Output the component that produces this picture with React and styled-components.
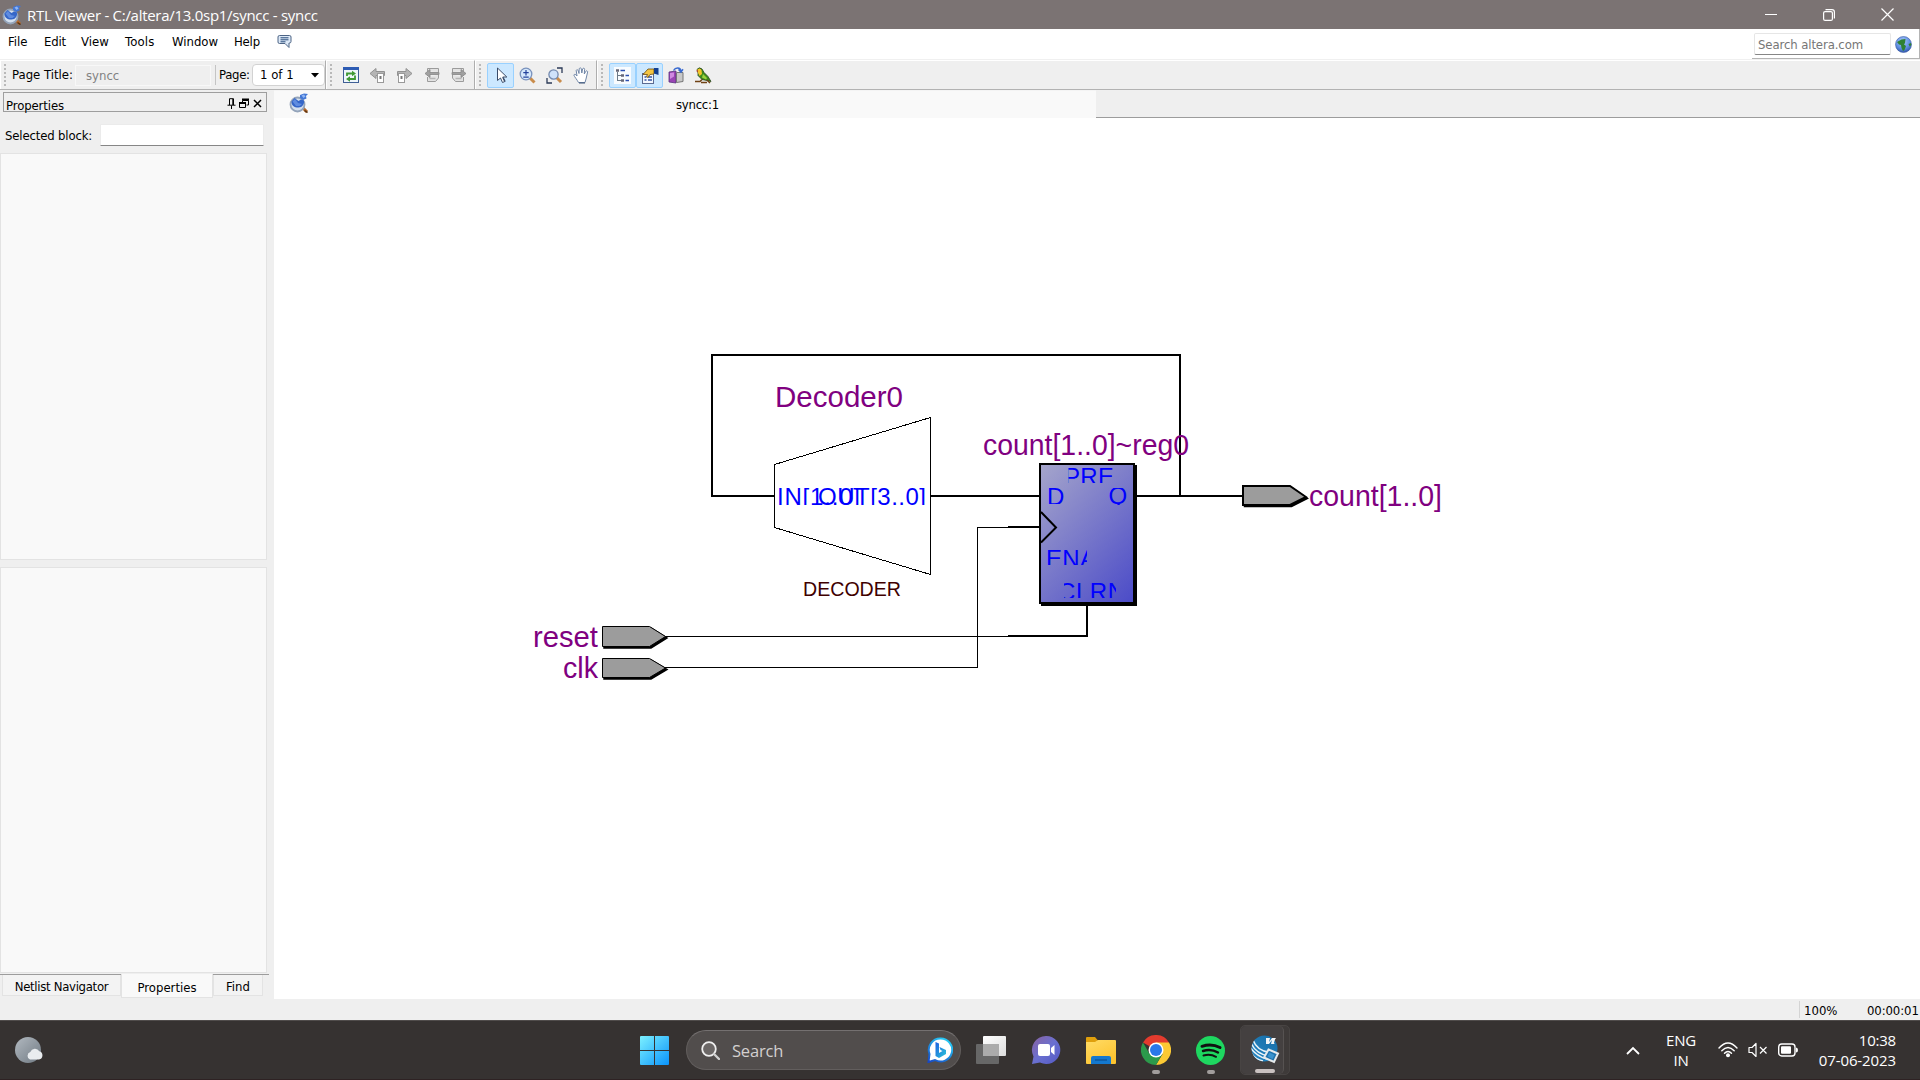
import React from "react";
import styled, { createGlobalStyle } from "styled-components";

const Global = createGlobalStyle`
  * { box-sizing: border-box; }
  body { margin: 0; overflow: hidden; background: #efefef; }
`;

const dialogFont = `"DejaVu Sans Condensed", "DejaVu Sans", sans-serif`;
const shellFont = `"Open Sans", "Noto Sans", sans-serif`;

const Screen = styled.div`
  width: 1920px;
  height: 1080px;
  display: flex;
  flex-direction: column;
  background: #efefef;
  font: 13px/16px ${dialogFont};
  color: #000;
  overflow: hidden;
`;

const Label = styled.span`
  display: block;
  white-space: nowrap;
  flex: none;
  width: ${(p) => (p.$w ? `${p.$w}px` : "auto")};
  letter-spacing: ${(p) => p.$ls || 0}px;
`;

/* ---------- title bar ---------- */
const TitleBar = styled.header`
  height: 29px;
  flex: none;
  display: flex;
  align-items: center;
  padding: 0 4px 0 2px;
  background: #7b7373;
  color: #fff;
`;
const TitleText = styled.div`
  margin-left: 5px;
  flex: 1;
  font: 15px/20px ${shellFont};
  letter-spacing: -0.28px;
  white-space: nowrap;
`;
const WindowButtons = styled.div`
  display: flex;
  svg { display: block; }
`;
const WindowButton = styled.div`
  width: 58px;
  height: 29px;
  display: flex;
  align-items: center;
  justify-content: center;
`;

/* ---------- menu ---------- */
const MenuBar = styled.nav`
  height: 30px;
  flex: none;
  display: flex;
  padding-left: 8px;
  background: #fff;
`;
const MenuItem = styled.div`
  width: ${(p) => p.$w}px;
  padding-top: 5px;
  letter-spacing: ${(p) => p.$ls || 0}px;
  white-space: nowrap;
`;
const SearchDock = styled.div`
  margin-left: auto;
  width: 168px;
  height: 30px;
  padding: 4px 7px 0 2px;
  display: flex;
  justify-content: space-between;
  border-bottom: 1px solid #b4b4b4;
  border-right: 1px solid #b4b4b4;
`;
const SearchField = styled.div`
  width: 137px;
  height: 22px;
  padding: 3px 0 0 3px;
  border: 1px solid #e6e6e6;
  border-bottom: 1px solid #868686;
  border-radius: 2px;
  color: #767676;
  white-space: nowrap;
  letter-spacing: -0.1px;
`;
const GlobeSlot = styled.div`
  padding-top: 3px;
`;

/* ---------- toolbar ---------- */
const ToolBar = styled.div`
  height: 31px;
  flex: none;
  display: flex;
  background: #efefef;
  border-top: 1px solid #f0f0f0;
  border-bottom: 1px solid #b2b2b2;
`;
const ToolGroup = styled.div`
  width: ${(p) => p.$w}px;
  flex: ${(p) => (p.$last ? 1 : "none")};
  height: 29px;
  display: flex;
  align-items: center;
  padding-left: 3px;
  border-left: 1px solid #fff;
  border-top: 1px solid #fff;
  border-right: ${(p) => (p.$last ? "0" : "1px solid #aeaeae")};
`;
const Grip = styled.div`
  width: 2px;
  height: 22px;
  flex: none;
  margin-right: ${(p) => p.$gap}px;
  background: repeating-linear-gradient(#b9b9b9 0 2px, transparent 2px 4px);
`;
const PageTitleField = styled.div`
  width: 136px;
  height: 21px;
  border: 1px solid #f8f8f8;
  padding: 2px 0 0 10px;
  color: #828282;
`;
const Divider = styled.div`
  width: 1px;
  height: 20px;
  margin: 0 3px 0 4px;
  background: #c4c4c4;
`;
const PageSelect = styled.div`
  width: 73px;
  height: 22px;
  display: flex;
  align-items: center;
  justify-content: space-between;
  padding: 0 5px 0 7px;
  background: #fff;
  border: 1px solid #d2d2d2;
  border-radius: 4px;
`;
const ToolButton = styled.div`
  width: 27px;
  height: 25px;
  flex: none;
  display: flex;
  align-items: center;
  justify-content: center;
  background: ${(p) => (p.$on ? "#cce8ff" : "transparent")};
  border: 1px solid ${(p) => (p.$on ? "#99d1ff" : "transparent")};
  border-radius: 2px;
`;

/* ---------- work area ---------- */
const Work = styled.div`
  flex: 1;
  min-height: 0;
  display: flex;
`;
const Dock = styled.aside`
  width: 274px;
  flex: none;
  display: flex;
  flex-direction: column;
`;
const DockTitle = styled.div`
  width: 264px;
  height: 20px;
  margin: 2px 0 0 3px;
  padding-left: 2px;
  display: flex;
  border: 1px solid #9e9e9e;
`;
const DockName = styled.div`
  flex: 1;
  padding-top: 5px;
  height: 22px;
  letter-spacing: -0.1px;
`;
const DockControls = styled.div`
  padding: 4px 3px 0 0;
`;
const BlockRow = styled.div`
  display: flex;
  align-items: center;
  height: 22px;
  margin: 12px 0 7px 5px;
`;
const BlockLabel = styled.label`
  width: 95px;
  flex: none;
  padding-top: 2px;
  white-space: nowrap;
  letter-spacing: -0.15px;
`;
const BlockField = styled.div`
  width: 164px;
  height: 22px;
  background: #fff;
  border: 1px solid #ebebeb;
  border-bottom: 1px solid #868686;
  border-radius: 1px;
`;
const ListPane = styled.div`
  width: 267px;
  height: 407px;
  margin-bottom: ${(p) => p.$gap}px;
  background: #f9f9f9;
  border: 1px solid #e3e3e3;
`;
const DockTabs = styled.div`
  width: 269px;
  display: flex;
  align-items: flex-start;
  padding-left: 2px;
  border-top: 1px solid #9c9c9c;
  height: 25px;
`;
const DockTab = styled.div`
  width: ${(p) => p.$w}px;
  height: ${(p) => (p.$active ? 24 : 21)}px;
  margin-top: ${(p) => (p.$active ? -1 : 0)}px;
  padding-top: ${(p) => (p.$active ? 6 : 4)}px;
  text-align: center;
  background: ${(p) => (p.$active ? "#f9f9f9" : "#f3f3f3")};
  border: 1px solid #e3e3e3;
  border-top: 0;
  white-space: nowrap;
  letter-spacing: ${(p) => p.$ls || 0}px;
`;

const Editor = styled.main`
  flex: 1;
  display: flex;
  flex-direction: column;
`;
const EditorTabs = styled.div`
  height: 28px;
  flex: none;
  display: flex;
`;
const EditorTab = styled.div`
  width: 822px;
  display: flex;
  align-items: center;
  padding: 0 0 3px 15px;
  background: #f9f9f9;
  border-top: 1px solid #f4f4f4;
`;
const EditorTabName = styled.div`
  margin: 4px 0 0 367px;
  letter-spacing: -0.25px;
`;
const TabFill = styled.div`
  flex: 1;
  border-bottom: 1px solid #9c9c9c;
`;
const Canvas = styled.svg`
  display: block;
  flex: none;
  width: 1646px;
  height: 881px;
  background: #fff;
  font-family: "Liberation Sans", Arial, sans-serif;
`;

/* ---------- status bar ---------- */
const StatusBar = styled.footer`
  height: 21px;
  flex: none;
  display: flex;
  justify-content: flex-end;
  padding: 2px 0 0;
`;
const StatusCell = styled.div`
  width: ${(p) => p.$w}px;
  height: 17px;
  padding: 2px 0 0 4px;
  border-left: ${(p) => (p.$line ? "1px solid #d4d4d4" : "0")};
  white-space: nowrap;
  line-height: 15px;
  letter-spacing: ${(p) => p.$ls || 0}px;
`;

/* ---------- taskbar ---------- */
const TaskBar = styled.div`
  height: 60px;
  flex: none;
  display: flex;
  align-items: center;
  background: #363231;
  border-top: 1px solid #504c4b;
  border-bottom: 1px solid #2e2223;
  color: #fff;
  font: 15px/20px ${shellFont};
  svg { display: block; }
`;
const Weather = styled.div`
  width: 626px;
  padding-left: 14px;
`;
const StartSlot = styled.div`
  width: 60px;
  padding-left: 14px;
`;
const SearchPill = styled.div`
  width: 275px;
  height: 40px;
  display: flex;
  align-items: center;
  padding: 0 7px 0 14px;
  background: #514d4c;
  border: 1px solid #625e5d;
  border-top-color: #747070;
  border-radius: 20px;
`;
const SearchHint = styled.div`
  flex: 1;
  margin: 2px 0 0 12px;
  font-size: 16.5px;
  letter-spacing: -0.2px;
  color: #d3d0cf;
`;
const Apps = styled.div`
  width: 640px;
  display: flex;
  padding-left: 2px;
`;
const AppSlot = styled.div`
  width: 55px;
  height: 50px;
  display: flex;
  flex-direction: column;
  align-items: center;
  justify-content: flex-end;
`;
const AppMark = styled.div`
  width: ${(p) => p.$w}px;
  height: 4px;
  margin: ${(p) => p.$mt}px 0 1px;
  border-radius: 2px;
  background: ${(p) => (p.$w ? (p.$w > 10 ? "#c9c1c0" : "#a19d9c") : "transparent")};
`;
const ActiveStack = styled.div`
  width: 50px;
  height: 50px;
  margin-left: 2px;
  padding-right: 5px;
  background: #3e3a39;
  border: 1px solid #484443;
  border-radius: 5px;
`;
const ActiveTile = styled.div`
  width: 43px;
  height: 48px;
  display: flex;
  flex-direction: column;
  align-items: center;
  justify-content: flex-end;
  padding-left: 6px;
  background: #444040;
  border-right: 1px solid #565251;
  border-radius: 5px;
`;
const Tray = styled.div`
  flex: 1;
  display: flex;
  align-items: center;
  justify-content: flex-end;
  padding-right: 24px;
`;
const Language = styled.div`
  width: 44px;
  margin: 0 15px 0 19px;
  text-align: center;
  letter-spacing: -0.2px;
`;
const TrayIcons = styled.div`
  display: flex;
  align-items: center;
  gap: 10px;
`;
const Clock = styled.div`
  width: 98px;
  display: flex;
  flex-direction: column;
  align-items: flex-end;
`;

/* ---------- icons ---------- */
const ViewerIcon = ({ size = 20 }) => (
  <svg width={size} height={size} viewBox="0 0 20 20">
    <path d="M13 14l5 5" stroke="#b4692c" strokeWidth="3" />
    <path d="M15.5 17.5l3 2" stroke="#5a3310" strokeWidth="1.5" />
    <circle cx="8.5" cy="11.5" r="7" fill="#d3dfee" stroke="#94a4ba" strokeWidth="1.8" />
    <path d="M2.500 8.500l3-3.500 4 3 2.500-1.500 3 1c.5 3.500-1.500 7-5.500 7-4.500 0-7-2-7-6z" fill="#3566c8" />
    <path d="M3.500 8.500L6 6l3 4 4 1-2.500 2H7z" fill="#5f8ce0" />
    <path d="M11 2l4-1.500 4 .5-2 2 .5 2.500-3.500 1.500-3-2z" fill="#4377d4" />
    <path d="M12.500 2.500l2.500-1 1.500 2-2 1.500z" fill="#8fb5f5" />
  </svg>
);
const ChatIcon = () => (
  <svg width="15" height="15" viewBox="0 0 15 15">
    <path d="M2.500 1.500h10q1.500 0 1.500 1.500v4.500q0 1.500-1.500 1.500H12v4.500L8 9.500H2.500Q1 9.500 1 8V3q0-1.500 1.500-1.500z" fill="#dde9f7" stroke="#4d6485" />
    <path d="M3.500 3.800h8M3.500 5.800h8M3.500 7.800h5" stroke="#274a7a" />
  </svg>
);
const GlobeIcon = () => (
  <svg width="17" height="17" viewBox="0 0 17 17">
    <defs>
      <radialGradient id="sea" cx=".45" cy=".3" r=".75">
        <stop offset="0" stopColor="#a9c9fb" />
        <stop offset=".6" stopColor="#5f8fe2" />
        <stop offset="1" stopColor="#2c4fa2" />
      </radialGradient>
    </defs>
    <circle cx="8.500" cy="8.500" r="8" fill="url(#sea)" stroke="#3a5ba5" strokeWidth=".6" />
    <path d="M2 6l4.500-2.500 4-.5-.5 4-1 1.500 2 1.500-1.500 4-1.500 1-1.500-3-.5-3-2-.5z" fill="#2f8132" />
    <path d="M13.500 8l2.500-1 .3 2-1.600 1.500z" fill="#2f8132" />
  </svg>
);
const DockControlIcons = () => (
  <svg width="36" height="11" viewBox="0 0 36 11">
    <path d="M2.500 7V.7h4V7M5.800 1v6M0.500 7.200h8M4.500 7.500V11" fill="none" stroke="#000" />
    <path d="M15.500 4V2.500h6v4.500h-2" fill="none" stroke="#000" />
    <path d="M15 1.500h7M12 5h7" stroke="#000" strokeWidth="2" />
    <path d="M12.500 5v4.500h6V5" fill="none" stroke="#000" />
    <path d="M27 2l7 7M34 2l-7 7" stroke="#000" strokeWidth="1.500" />
  </svg>
);
const RefreshIcon = () => (
  <svg width="16" height="16" viewBox="0 0 16 16">
    <rect x=".5" y=".5" width="15" height="15" fill="#eef6fb" stroke="#3f5f95" />
    <rect width="16" height="3" fill="#2d5cb4" />
    <path d="M4 9V6.500h6" fill="none" stroke="#3f9a34" strokeWidth="1.800" />
    <path d="M12 8.500V12H7" fill="none" stroke="#3f9a34" strokeWidth="1.800" />
    <path d="M9 3.800l4 2.700-4 2.700zM7 9.300L3 12l4 2.700z" fill="#3f9a34" />
  </svg>
);
const StepIcon = ({ flip }) => (
  <svg width="17" height="16" viewBox="0 0 17 16" transform={flip ? "scale(-1,1)" : undefined}>
    <path d="M1 6.500l6-5v3h8.500v4H7v3z" fill="#b5b5b5" stroke="#929292" />
    <rect x="8.500" y="6.500" width="6" height="9" fill="#fff" stroke="#9a9a9a" />
    <rect x="10.500" y="9" width="2" height="3" fill="#777" />
  </svg>
);
const PageJumpIcon = ({ flip }) => (
  <svg width="16" height="16" viewBox="0 0 16 16" transform={flip ? "scale(-1,1)" : undefined}>
    <path d="M3.500 4V1.500h11V5M14.500 8v3l-3 3.500h-8V10" fill="#e3e3e3" stroke="#9b9b9b" />
    <path d="M5.500 11.500h6" stroke="#b5b5b5" strokeWidth="1.500" />
    <path d="M1 6.500l5-4v3h9v2H6v3z" fill="#a0a0a0" stroke="#858585" strokeWidth=".8" />
  </svg>
);
const PointerIcon = () => (
  <svg width="16" height="20" viewBox="0 0 16 20">
    <path d="M4.500 3v12.500l3-2.500 2 4.500 2.300-1-2-4.500h4z" fill="#fff" stroke="#3b4c69" />
    <path d="M10 12.500l2 4" stroke="#3b4c69" strokeWidth="1.600" />
  </svg>
);
const ZoomInIcon = () => (
  <svg width="17" height="17" viewBox="0 0 17 17">
    <path d="M11 11l4.500 4.500" stroke="#c98c4b" strokeWidth="3" />
    <circle cx="7" cy="7" r="5.800" fill="#d6e8fc" stroke="#7992bd" strokeWidth="1.300" />
    <path d="M4.300 5.700h5.400M7 3v5.400M4.300 10.200h5.400" stroke="#23419c" strokeWidth="1.200" />
  </svg>
);
const FitIcon = () => (
  <svg width="17" height="17" viewBox="0 0 17 17">
    <path d="M11 1h5v5M1 11v5h5" fill="none" stroke="#2b3a57" strokeWidth="1.300" />
    <path d="M10.500 10.500l4.500 4.500" stroke="#c98c4b" strokeWidth="3" />
    <circle cx="7.500" cy="7.500" r="4.600" fill="#cfe2fa" stroke="#7389ae" strokeWidth="1.300" />
  </svg>
);
const HandIcon = () => (
  <svg width="17" height="17" viewBox="0 0 17 17">
    <path d="M5.500 15.500C4 12.500 1.500 10 .8 8c.6-1.200 2-.8 3.200 1L3.200 3.500c.5-1.300 1.700-1 2 .3L6 6.500 6.200 1.800c.5-1.300 1.800-1.300 2.100 0L8.800 6l.8-4c.6-1.300 2-1 2 .3L11.300 7l1.500-2.700c.8-1 2-.4 1.800.8L13 12l-1 3.500z" fill="#fff" stroke="#7187a8" />
    <path d="M6 16h6" stroke="#3c5275" />
  </svg>
);
const TreeIcon = () => (
  <svg width="17" height="17" viewBox="0 0 17 17">
    <rect width="17" height="17" fill="#f9fcff" />
    <path d="M3.500 5v9M3.500 8.500H8M3.500 13.500H8" fill="none" stroke="#6d7a88" />
    <path d="M2 3.500h3M7 8.500h3M7 13.500h3" stroke="#667" strokeWidth="2.500" />
    <path d="M6.500 3.500h4.500M11.500 8.500H15M11.500 13.500H15" stroke="#2c4fb1" strokeWidth="1.500" />
  </svg>
);
const PropsIcon = () => (
  <svg width="18" height="17" viewBox="0 0 18 17">
    <rect x="1.500" y="6.500" width="11" height="10" fill="#f3f7fd" stroke="#5a6b92" />
    <path d="M3.500 10h2M7 10h4M3.500 13h2M7 13h4" stroke="#3556a5" strokeWidth="1.300" />
    <path d="M2 7.500L7 2h6v5l-4 .5-2 3-1.500-1 1-2z" fill="#f4c542" stroke="#6a4a10" strokeWidth=".8" />
    <path d="M13 1h4.500v7L13 6.500z" fill="#123e90" />
  </svg>
);
const SwapIcon = () => (
  <svg width="17" height="17" viewBox="0 0 17 17">
    <path d="M1 5l7-1v12l-7-1z" fill="#9a45b5" stroke="#57307c" strokeWidth=".8" />
    <path d="M2 6l4-.5v4L2 12z" fill="#cf8ae0" />
    <path d="M8.500 5.500h6.500v9l-6.500 1z" fill="#c8c8c8" stroke="#777" />
    <path d="M5.500 3.500c2-3.500 7-3.500 7.500.5M10.500 2.500l2.500 2.500 2-2.700" fill="none" stroke="#3a6bd0" strokeWidth="1.500" />
  </svg>
);
const BirdIcon = () => (
  <svg width="17" height="17" viewBox="0 0 17 17">
    <path d="M2 2.500Q4-.5 7 2l2 3.500 4 4 3 5-4-1-5-1-4-4V6z" fill="#3d8c1f" stroke="#27441a" strokeWidth=".8" />
    <path d="M2 3q2.500-3 4.500 0L7 7 4.500 9 3 6z" fill="#f2c42b" />
    <path d="M8 7l4 4-1 1.500-4-2z" fill="#9bd23e" />
    <path d="M1 4l2-1v2z" fill="#a33" />
    <path d="M0 14.500h5l2-2M6 15.500h6M12 13l3 3" stroke="#704214" strokeWidth="1.500" fill="none" />
  </svg>
);

const WeatherIcon = () => (
  <svg width="30" height="28" viewBox="0 0 30 28">
    <defs>
      <linearGradient id="moon" x1="0" y1="0" x2="1" y2="1">
        <stop offset="0" stopColor="#b2b9c0" />
        <stop offset="1" stopColor="#707a83" />
      </linearGradient>
    </defs>
    <circle cx="14" cy="14" r="13" fill="url(#moon)" />
    <path d="M16 23.500a4 4 0 0 1 .3-7.500 5 5 0 0 1 9-.7 4.200 4.200 0 0 1-.3 8.200z" fill="#e9ecef" />
  </svg>
);
const StartIcon = () => (
  <svg width="29" height="29" viewBox="0 0 29 29">
    <defs>
      <linearGradient id="win" gradientUnits="userSpaceOnUse" x1="0" y1="0" x2="29" y2="29">
        <stop offset="0" stopColor="#7cf1ff" />
        <stop offset="1" stopColor="#0a93fb" />
      </linearGradient>
    </defs>
    <path d="M0 1q0-1 1-1h13v14H0zM15 0h13q1 0 1 1v13H15zM0 15h14v14H1q-1 0-1-1zM15 15h14v13q0 1-1 1H15z" fill="url(#win)" />
  </svg>
);
const BingIcon = () => (
  <svg width="26" height="26" viewBox="0 0 26 26">
    <defs>
      <linearGradient id="ring" x1="0" y1="1" x2=".6" y2="0">
        <stop offset="0" stopColor="#1746c4" />
        <stop offset="1" stopColor="#25c5f3" />
      </linearGradient>
      <linearGradient id="bee" x1="0" y1="0" x2="1" y2="1">
        <stop offset="0" stopColor="#1d5fe0" />
        <stop offset="1" stopColor="#2bc6d9" />
      </linearGradient>
    </defs>
    <path d="M13.500 1.500a11.500 11.500 0 1 1-5.500 21.500L1.500 25l1-8A11.500 11.500 0 0 1 13.500 1.500z" fill="#fff" stroke="url(#ring)" strokeWidth="2" />
    <path d="M8.500 5l3.500 1.500v9.500l3.500-2-2-1-1-3 6.500 3v4l-7 4-3.500-2z" fill="url(#bee)" />
  </svg>
);
const TaskViewIcon = () => (
  <svg width="30" height="28" viewBox="0 0 30 28">
    <defs>
      <linearGradient id="pane" x1="0" y1="0" x2="1" y2="1">
        <stop offset="0" stopColor="#fff" />
        <stop offset="1" stopColor="#dcdcdc" />
      </linearGradient>
    </defs>
    <rect x="7" width="23" height="20" rx="1" fill="url(#pane)" />
    <rect y="8" width="23" height="20" rx="1" fill="#6a6a6a" opacity=".95" />
    <rect x="7" y="8" width="16" height="12" fill="#ababab" />
  </svg>
);
const MeetIcon = () => (
  <svg width="30" height="30" viewBox="0 0 30 30">
    <defs>
      <linearGradient id="meet" x1="0" y1="0" x2="1" y2="1">
        <stop offset="0" stopColor="#8a62a0" />
        <stop offset=".5" stopColor="#6a70d0" />
        <stop offset="1" stopColor="#5358c4" />
      </linearGradient>
    </defs>
    <path d="M15 1a14 14 0 1 1-6 26.500L1 29l1.500-7.500A14 14 0 0 1 15 1z" fill="url(#meet)" />
    <rect x="7" y="9" width="12" height="12" rx="2" fill="#fff" />
    <path d="M20 13l3.500-3v10L20 17z" fill="#fff" />
  </svg>
);
const FolderIcon = () => (
  <svg width="30" height="27" viewBox="0 0 30 27">
    <defs>
      <linearGradient id="fold" x1="0" y1="0" x2=".6" y2="1">
        <stop offset="0" stopColor="#ffdb66" />
        <stop offset="1" stopColor="#fdc42f" />
      </linearGradient>
    </defs>
    <path d="M0 1q0-1 1-1h8l3 3.500V8H0z" fill="#df9f0c" />
    <path d="M0 5h9l3-2h17q1 0 1 1v22q0 1-1 1H1q-1 0-1-1z" fill="url(#fold)" />
    <path d="M5 27v-6q0-2 2-2h16q2 0 2 2v6z" fill="#1478ce" />
    <path d="M9 23h12" stroke="#0b4f90" strokeWidth="1.200" />
  </svg>
);
const ChromeIcon = () => (
  <svg width="30" height="30" viewBox="0 0 30 30">
    <path d="M15 15L2 7.500A15 15 0 0 1 28 7.500z" fill="#e33b2e" />
    <path d="M15 15V7.500h13A15 15 0 0 1 15 30l6.500-11z" fill="#fcc934" />
    <path d="M2 7.500A15 15 0 0 0 15 30l6.500-11.300L8.500 18.800z" fill="#2c9a4b" />
    <circle cx="15" cy="15" r="7.500" fill="#fff" />
    <circle cx="15" cy="15" r="6" fill="#2a78ea" />
  </svg>
);
const SpotifyIcon = () => (
  <svg width="29" height="29" viewBox="0 0 29 29">
    <circle cx="14.500" cy="14.500" r="14.500" fill="#1ed760" />
    <path d="M6 10.300Q15.500 7 24 11.500" fill="none" stroke="#111" strokeWidth="3" strokeLinecap="round" />
    <path d="M7 15q8-2.500 15 1.500" fill="none" stroke="#111" strokeWidth="2.400" strokeLinecap="round" />
    <path d="M7.500 19.500q7-1.800 12.500 1.300" fill="none" stroke="#111" strokeWidth="2" strokeLinecap="round" />
  </svg>
);
const QuartusIcon = () => (
  <svg width="29" height="29" viewBox="0 0 29 29">
    <defs>
      <clipPath id="ball"><circle cx="13.500" cy="13.500" r="13" /></clipPath>
      <linearGradient id="ballFill" x1=".8" y1="0" x2="0" y2="1">
        <stop offset="0" stopColor="#1a6fa8" />
        <stop offset="1" stopColor="#2387c5" />
      </linearGradient>
    </defs>
    <circle cx="13.500" cy="13.500" r="13" fill="url(#ballFill)" />
    <g clipPath="url(#ball)" fill="none" stroke="#e8f2f8" strokeWidth="1.500">
      <path d="M2 5q4 11 17 12.500M0 8q5 11 18 13M-1 12q6 9 17 12M0 18q5 7 12 8" />
    </g>
    <path d="M15 3h4l-1 4 3-4h4l-1 1.500-1 3 .5 1.500h-3.500l1-4-3 4h-3z" fill="#f2f4f5" />
    <path d="M17.500 14.500l9.500 4-4 8.500-10-4.500z" fill="#1f72ad" stroke="#e6eaec" strokeWidth="2" />
    <path d="M18.500 17.500l5 2.500-2 4-5-2.500z" fill="#3a93cf" />
  </svg>
);

const WifiIcon = () => (
  <svg width="20" height="16" viewBox="0 0 20 16">
    <g fill="none" stroke="#fff" strokeWidth="1.400" strokeLinecap="round">
      <path d="M1 6Q10-4 19 6" />
      <path d="M3.800 8.800q6.200-6.600 12.400 0" />
      <path d="M6.500 11.300q3.500-3.600 7 0" />
    </g>
    <circle cx="10" cy="13.300" r="2" fill="#fff" />
  </svg>
);
const MuteIcon = () => (
  <svg width="20" height="16" viewBox="0 0 20 16">
    <path d="M1 5.500h3l4-4v13l-4-4H1z" fill="none" stroke="#fff" strokeWidth="1.200" strokeLinejoin="round" />
    <path d="M12 5l6.500 6.500M18.500 5L12 11.500" stroke="#fff" strokeWidth="1.200" />
  </svg>
);
const BatteryIcon = () => (
  <svg width="20" height="14" viewBox="0 0 20 14">
    <rect x=".7" y="1" width="16.300" height="12" rx="3" fill="none" stroke="#fff" strokeWidth="1.400" />
    <rect x="3" y="3.300" width="10" height="7.400" rx="1" fill="#fff" />
    <path d="M18 4.500q2 0 2 2.500t-2 2.500z" fill="#fff" />
  </svg>
);

/* ---------- schematic ---------- */
const NetLabel = styled.text`
  font-size: 29px;
  fill: #800080;
`;
const PortLabel = styled.text`
  font-size: 24px;
  fill: #0000ff;
`;

const Pin = ({ x, y, w, bottom, mid, stroke = 1 }) => {
  const shape = `M${x} ${y}H${x + w}L${x + w + 16} ${mid}L${x + w} ${bottom}H${x}z`;
  return (
    <g>
      <path d={shape} transform="translate(1.5 1.5)" fill="#000" stroke="#000" strokeWidth="1.5" />
      <path d={shape} fill="#9c9c9c" stroke="#000" strokeWidth={stroke} />
    </g>
  );
};

/* The port names are cut off by the small boxes that the symbols reserve for them. */
const Port = ({ id, x, baseline, clip, children, w }) => (
  <g>
    <clipPath id={id}>
      <rect x={clip[0]} y={clip[1]} width={clip[2]} height={clip[3]} />
    </clipPath>
    <g clipPath={`url(#${id})`}>
      <PortLabel x={x} y={baseline} textLength={w}>{children}</PortLabel>
    </g>
  </g>
);

const Schematic = () => (
  <Canvas viewBox="274 118 1646 881">
    <defs>
      <linearGradient id="reg" gradientUnits="userSpaceOnUse" x1="1025" y1="480" x2="1149" y2="587">
        <stop offset="0" stopColor="#a6a6cb" />
        <stop offset="1" stopColor="#4a4ac8" />
      </linearGradient>
    </defs>
    <g fill="none" stroke="#000" strokeWidth="2" shapeRendering="crispEdges">
      <path d="M774 496H712V355H1180V496" />
      <path d="M930 496H1040M1136 496H1243" />
      <path d="M1008 527H1040M1008 636H1087V605" />
      <path d="M1008 527.5H977.5V667.5H665M1008 636.5H665" strokeWidth="1" />
      <path d="M774.5 464.500L930.500 417.500V574.500L774.500 527.500z" strokeWidth="1" />
    </g>
    <rect x="1041" y="465" width="96" height="141" fill="#000" />
    <rect x="1040" y="464" width="94" height="139" fill="url(#reg)" stroke="#000" strokeWidth="2" />
    <path d="M1041 512L1056 527.500L1041 542.500" fill="none" stroke="#000" strokeWidth="2" />
    <Port id="pIn" x={777} baseline={505} clip={[778, 487, 147, 18]} w={83}>IN[1..0]</Port>
    <Port id="pOut" x={818} baseline={505} clip={[818, 487, 108, 18]} w={108}>OUT[3..0]</Port>
    <Port id="pPre" x={1064} baseline={485} clip={[1068.5, 468, 44, 15]} w={50}>PRE</Port>
    <Port id="pD" x={1047} baseline={504.5} clip={[1046, 488, 20, 16]} w={17}>D</Port>
    <Port id="pQ" x={1108.500} baseline={504} clip={[1108, 488, 20, 17]} w={19}>Q</Port>
    <Port id="pEna" x={1046} baseline={567} clip={[1045, 550, 42, 15]} w={50}>ENA</Port>
    <Port id="pClr" x={1058} baseline={600} clip={[1064, 583, 52, 15]} w={67}>CLRN</Port>
    <NetLabel x={775} y={407} textLength={128} lengthAdjust="spacingAndGlyphs">Decoder0</NetLabel>
    <NetLabel x={983} y={455} textLength={206} lengthAdjust="spacingAndGlyphs">count[1..0]~reg0</NetLabel>
    <NetLabel x={533} y={647} textLength={65} lengthAdjust="spacingAndGlyphs">reset</NetLabel>
    <NetLabel x={563} y={678} textLength={35} lengthAdjust="spacingAndGlyphs">clk</NetLabel>
    <NetLabel x={1309} y={506} textLength={133} lengthAdjust="spacingAndGlyphs">count[1..0]</NetLabel>
    <text x={803} y={596} fontSize="21" fill="#400000" textLength={98} lengthAdjust="spacingAndGlyphs">DECODER</text>
    <Pin x={602.5} y={626.5} w={47} bottom={646.5} mid={636.5} />
    <Pin x={602.5} y={658.5} w={47} bottom={677.5} mid={668} />
    <Pin x={1243} y={486} w={47} bottom={505} mid={497} stroke={2} />
  </Canvas>
);

export default function App() {
  return (
    <Screen>
      <Global />
      <TitleBar>
        <ViewerIcon />
        <TitleText>RTL Viewer - C:/altera/13.0sp1/syncc - syncc</TitleText>
        <WindowButtons>
          <WindowButton>
            <svg width="12" height="12"><path d="M0 5.500h12" stroke="#fff" /></svg>
          </WindowButton>
          <WindowButton>
            <svg width="12" height="12" viewBox="0 0 12 12">
              <rect x=".6" y="2.600" width="8.800" height="8.800" rx="1.500" fill="none" stroke="#fff" strokeWidth="1.200" />
              <path d="M2.500.6H9q2.400 0 2.400 2.400v6.500" fill="none" stroke="#fff" strokeWidth="1.200" />
            </svg>
          </WindowButton>
          <WindowButton>
            <svg width="13" height="13"><path d="M.5.5l12 12M12.500.5l-12 12" stroke="#fff" strokeWidth="1.200" /></svg>
          </WindowButton>
        </WindowButtons>
      </TitleBar>

      <MenuBar>
        <MenuItem $w={36}>File</MenuItem>
        <MenuItem $w={37} $ls={-0.15}>Edit</MenuItem>
        <MenuItem $w={44}>View</MenuItem>
        <MenuItem $w={47} $ls={0.2}>Tools</MenuItem>
        <MenuItem $w={62}>Window</MenuItem>
        <MenuItem $w={43} $ls={-0.2}>Help</MenuItem>
        <MenuItem $w={20}><ChatIcon /></MenuItem>
        <SearchDock>
          <SearchField>Search altera.com</SearchField>
          <GlobeSlot><GlobeIcon /></GlobeSlot>
        </SearchDock>
      </MenuBar>

      <ToolBar>
        <ToolGroup $w={326}>
          <Grip $gap={6} />
          <Label $w={63}>Page Title:</Label>
          <PageTitleField>syncc</PageTitleField>
          <Divider />
          <Label $w={33} $ls={-0.3}>Page:</Label>
          <PageSelect>
            1 of 1
            <svg width="8" height="5"><path d="M0 0h8L4 4.500z" /></svg>
          </PageSelect>
        </ToolGroup>
        <ToolGroup $w={149}>
          <Grip $gap={5} />
          <ToolButton><RefreshIcon /></ToolButton>
          <ToolButton><StepIcon /></ToolButton>
          <ToolButton><StepIcon flip /></ToolButton>
          <ToolButton><PageJumpIcon /></ToolButton>
          <ToolButton><PageJumpIcon flip /></ToolButton>
        </ToolGroup>
        <ToolGroup $w={122}>
          <Grip $gap={6} />
          <ToolButton $on><PointerIcon /></ToolButton>
          <ToolButton><ZoomInIcon /></ToolButton>
          <ToolButton><FitIcon /></ToolButton>
          <ToolButton><HandIcon /></ToolButton>
        </ToolGroup>
        <ToolGroup $w={200} $last>
          <Grip $gap={6} />
          <ToolButton $on><TreeIcon /></ToolButton>
          <ToolButton $on><PropsIcon /></ToolButton>
          <ToolButton><SwapIcon /></ToolButton>
          <ToolButton><BirdIcon /></ToolButton>
        </ToolGroup>
      </ToolBar>

      <Work>
        <Dock>
          <DockTitle>
            <DockName>Properties</DockName>
            <DockControls><DockControlIcons /></DockControls>
          </DockTitle>
          <BlockRow>
            <BlockLabel>Selected block:</BlockLabel>
            <BlockField />
          </BlockRow>
          <ListPane $gap={7} />
          <ListPane $gap={1} />
          <DockTabs>
            <DockTab $w={119} $ls={-0.3}>Netlist Navigator</DockTab>
            <DockTab $w={92} $active>Properties</DockTab>
            <DockTab $w={50}>Find</DockTab>
          </DockTabs>
        </Dock>
        <Editor>
          <EditorTabs>
            <EditorTab>
              <ViewerIcon />
              <EditorTabName>syncc:1</EditorTabName>
            </EditorTab>
            <TabFill />
          </EditorTabs>
          <Schematic />
        </Editor>
      </Work>

      <StatusBar>
        <StatusCell $w={64} $line>100%</StatusCell>
        <StatusCell $w={57} $ls={-0.1}>00:00:01</StatusCell>
      </StatusBar>

      <TaskBar>
        <Weather><WeatherIcon /></Weather>
        <StartSlot><StartIcon /></StartSlot>
        <SearchPill>
          <svg width="19" height="19" viewBox="0 0 19 19">
            <circle cx="8" cy="8" r="6.800" fill="#6b6766" stroke="#efefef" strokeWidth="1.800" />
            <path d="M13 13l5 5" stroke="#cfcfcf" strokeWidth="2.400" strokeLinecap="round" />
          </svg>
          <SearchHint>Search</SearchHint>
          <BingIcon />
        </SearchPill>
        <Apps>
          <AppSlot><TaskViewIcon /><AppMark $mt={6} /></AppSlot>
          <AppSlot><MeetIcon /><AppMark $mt={5} /></AppSlot>
          <AppSlot><FolderIcon /><AppMark $mt={6} /></AppSlot>
          <AppSlot><ChromeIcon /><AppMark $mt={5} $w={8} /></AppSlot>
          <AppSlot><SpotifyIcon /><AppMark $mt={5} $w={8} /></AppSlot>
          <ActiveStack>
            <ActiveTile><QuartusIcon /><AppMark $mt={5} $w={20} /></ActiveTile>
          </ActiveStack>
        </Apps>
        <Tray>
          <svg width="14" height="9"><path d="M1 8l6-6 6 6" fill="none" stroke="#fff" strokeWidth="1.800" /></svg>
          <Language>ENG<br />IN</Language>
          <TrayIcons><WifiIcon /><MuteIcon /><BatteryIcon /></TrayIcons>
          <Clock>
            <Label $ls={-0.2}>10:38</Label>
            <Label $ls={-0.1}>07-06-2023</Label>
          </Clock>
        </Tray>
      </TaskBar>
    </Screen>
  );
}
